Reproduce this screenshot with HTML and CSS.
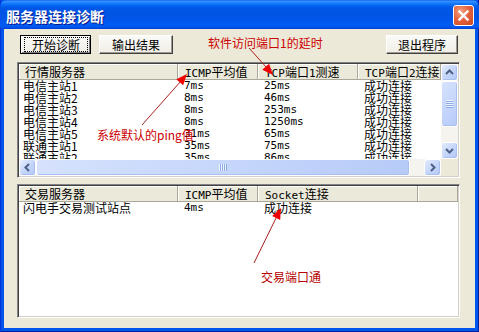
FILE: index.html
```html
<!DOCTYPE html>
<html>
<head>
<meta charset="utf-8">
<link rel="stylesheet" href="styles.css">
</head>
<body>
<div class="window">
  <div class="titlebar">
    <span class="title">服务器连接诊断</span>
    <div class="close">
      <svg width="19" height="19" viewBox="0 0 19 19"><path d="M5.5 5.5 L13.5 13.5 M13.5 5.5 L5.5 13.5" stroke="#fff" stroke-width="2.4" stroke-linecap="square"/></svg>
    </div>
  </div>
  <div class="client">
    <div class="toolbar">
      <button class="btn btn-default"><span class="focus">开始诊断</span></button>
      <button class="btn btn-out">输出结果</button>
      <span class="spacer"></span>
      <button class="btn btn-exit">退出程序</button>
    </div>

    <div class="list list-top">
      <div class="view">
        <div class="head">
          <div class="hc w1">行情服务器</div>
          <div class="hc w2"><span class="m">ICMP</span>平均值</div>
          <div class="hc w3"><span class="m">TCP</span>端口<span class="m">1</span>测速</div>
          <div class="hc w4"><span class="m">TCP</span>端口<span class="m">2</span>连接</div>
        </div>
        <div class="row"><span class="c w1">电信主站1</span><span class="c w2 m">7ms</span><span class="c w3 m">25ms</span><span class="c w4">成功连接</span></div>
        <div class="row"><span class="c w1">电信主站2</span><span class="c w2 m">8ms</span><span class="c w3 m">46ms</span><span class="c w4">成功连接</span></div>
        <div class="row"><span class="c w1">电信主站3</span><span class="c w2 m">8ms</span><span class="c w3 m">253ms</span><span class="c w4">成功连接</span></div>
        <div class="row"><span class="c w1">电信主站4</span><span class="c w2 m">8ms</span><span class="c w3 m">1250ms</span><span class="c w4">成功连接</span></div>
        <div class="row"><span class="c w1">电信主站5</span><span class="c w2 m">31ms</span><span class="c w3 m">65ms</span><span class="c w4">成功连接</span></div>
        <div class="row"><span class="c w1">联通主站1</span><span class="c w2 m">35ms</span><span class="c w3 m">75ms</span><span class="c w4">成功连接</span></div>
        <div class="row"><span class="c w1">联通主站2</span><span class="c w2 m">35ms</span><span class="c w3 m">86ms</span><span class="c w4">成功连接</span></div>
      </div>
      <div class="vscroll">
        <div class="sb"><svg width="15" height="15" viewBox="0 0 15 15"><polyline points="4,9 7.5,5.5 11,9" fill="none" stroke="#4D6185" stroke-width="2"/></svg></div>
        <div class="thumb thumb-v"><div class="grip-v"></div></div>
        <div class="track"></div>
        <div class="sb"><svg width="15" height="15" viewBox="0 0 15 15"><polyline points="4,6 7.5,9.5 11,6" fill="none" stroke="#4D6185" stroke-width="2"/></svg></div>
      </div>
      <div class="hscroll">
        <div class="sb"><svg width="15" height="15" viewBox="0 0 15 15"><polyline points="9,4 5.5,7.5 9,11" fill="none" stroke="#4D6185" stroke-width="2"/></svg></div>
        <div class="thumb thumb-h"><div class="grip-h"></div></div>
        <div class="track"></div>
        <div class="sb"><svg width="15" height="15" viewBox="0 0 15 15"><polyline points="6,4 9.5,7.5 6,11" fill="none" stroke="#4D6185" stroke-width="2"/></svg></div>
      </div>
      <div class="corner"></div>
    </div>

    <div class="list list-bottom">
      <div class="view">
        <div class="head">
          <div class="hc w1">交易服务器</div>
          <div class="hc w2"><span class="m">ICMP</span>平均值</div>
          <div class="hc w5"><span class="m">Socket</span>连接</div>
          <div class="hc w6"></div>
        </div>
        <div class="row"><span class="c w1">闪电手交易测试站点</span><span class="c w2 m">4ms</span><span class="c w5">成功连接</span></div>
      </div>
    </div>
  </div>

  <div class="note n1">软件访问端口<span class="nm">1</span>的延时</div>
  <div class="note n2">系统默认的ping值</div>
  <div class="note n3">交易端口通</div>

  <svg class="arrows" width="479" height="332" viewBox="0 0 479 332">
    <line x1="249" y1="48" x2="267" y2="68" stroke="#A8201A" stroke-width="1"/>
    <polygon points="273,75 262.3,69.8 269.1,63.8" fill="#F00000"/>
    <line x1="142" y1="125" x2="181" y2="81" stroke="#A8201A" stroke-width="1"/>
    <polygon points="187,74 183.1,85.2 176.3,79.3" fill="#F00000"/>
    <line x1="254" y1="263" x2="277" y2="216" stroke="#A8201A" stroke-width="1"/>
    <polygon points="281,208 280.2,219.9 272.1,215.9" fill="#F00000"/>
  </svg>
</div>
</body>
</html>
```

FILE: styles.css
```css
* { box-sizing: border-box; margin: 0; padding: 0; }
html, body { width: 479px; height: 332px; overflow: hidden; }
body {
  font-family: "Noto Sans CJK SC", sans-serif;
  font-size: 12px;
  color: #000;
  background: #fff;
}
.window {
  position: relative;
  width: 479px;
  height: 332px;
  display: flex;
  flex-direction: column;
  background: #0055EA;
  box-shadow: inset 1px 0 #0831D9, inset -1px 0 #001EA0, inset 0 -1px #001EA0;
}
.titlebar {
  height: 29px;
  flex: none;
  display: flex;
  align-items: center;
  padding-top: 2px;
  background: linear-gradient(to bottom, #0058EE 0, #3A93FF 1px, #2A8AFF 2px, #0F75FC 4px, #0262EE 6px, #0057E5 8px, #0054E3 14px, #0055EB 20px, #005CF5 24px, #0058EE 27px, #003DD7 29px);
  border-radius: 7px 7px 0 0;
}
.title {
  margin-left: 6px;
  color: #fff;
  font-weight: bold;
  font-size: 14px;
  line-height: 16px;
  text-shadow: 1px 1px 0 #0A1A8A;
}
.close {
  margin-left: auto;
  margin-right: 5px;
  width: 21px;
  height: 21px;
  border: 1px solid #fff;
  border-radius: 3px;
  background: radial-gradient(circle at 35% 30%, #F3A184 0, #E4643F 45%, #CB451F 100%);
  display: flex;
  align-items: center;
  justify-content: center;
}
.client {
  flex: 1;
  margin: 0 4px 4px 4px;
  background: #ECE9D8;
  padding: 6px 15px 10px 13px;
  display: flex;
  flex-direction: column;
}
.toolbar {
  height: 19px;
  display: flex;
  flex: none;
}
.btn {
  height: 19px;
  font-family: "Noto Sans CJK SC", sans-serif;
  font-size: 12px;
  line-height: 15px;
  color: #000;
  background: linear-gradient(to bottom, #FAFAF7, #F0EEE6);
  border: 1px solid;
  border-color: #fff #404040 #404040 #fff;
  box-shadow: inset -1px -1px 0 #9D9B90;
  padding: 0;
  display: flex;
  align-items: center;
  justify-content: center;
}
.btn-default {
  margin-left: 3px;
  width: 71px;
  border-color: #000;
  box-shadow: inset 1px 1px 0 #fff, inset -1px -1px 0 #808080;
  padding: 1px 2px 1px 3px;
  align-items: stretch;
}
.focus {
  flex: 1;
  border: 1px dotted #000;
  line-height: 13px;
  display: flex;
  align-items: center;
  justify-content: center;
}
.btn-out { margin-left: 8px; width: 74px; }
.spacer { flex: 1; }
.btn-exit { width: 72px; margin-right: 2px; }

.list {
  background: #fff;
  border: 1px solid;
  border-color: #848284 #fff #fff #848284;
  box-shadow: inset 1px 1px 0 #404040, inset -1px -1px 0 #D4D0C8;
  padding: 1px;
  flex: none;
}
.list-top {
  margin-top: 8px;
  height: 116px;
  display: grid;
  grid-template-columns: 1fr 17px;
  grid-template-rows: 1fr 17px;
}
.list-bottom {
  margin-top: 6px;
  height: 134px;
}
.view {
  overflow: hidden;
  min-width: 0;
  min-height: 0;
  white-space: nowrap;
}
.head {
  display: flex;
  height: 16px;
  background: #EBE9DA;
  border-bottom: 1px solid #ACA899;
}
.hc {
  flex: none;
  height: 15px;
  line-height: 15px;
  padding-left: 7px;
  border-right: 1px solid #ACA899;
  box-shadow: inset 1px 1px 0 #fff;
}
.hc.w1 { padding-left: 6px; }
.row {
  display: flex;
  height: 12px;
  line-height: 12px;
}
.c {
  flex: none;
  padding-left: 6px;
}
.c.w1 { padding-left: 4px; }
.w1 { width: 159px; }
.w2 { width: 80px; }
.w3 { width: 100px; }
.w4 { width: 83px; }
.w5 { width: 160px; }
.w6 { width: 40px; }
.m {
  font-family: "DejaVu Sans Mono", monospace;
  font-size: 11px;
}

.vscroll {
  display: flex;
  flex-direction: column;
  background: #F5F4EE;
}
.hscroll {
  display: flex;
  background: #F5F4EE;
}
.corner { background: #ECE9D8; }
.sb {
  width: 17px;
  height: 17px;
  flex: none;
  border: 1px solid #fff;
  border-radius: 3px;
  background: linear-gradient(135deg, #E3EBFE 0, #C4D5FB 55%, #B3C8F7 100%);
  box-shadow: inset -1px -1px 0 #A9BFEF;
  display: flex;
  align-items: center;
  justify-content: center;
}
.track { flex: 1; background: #F5F4EE; }
.thumb {
  flex: none;
  border: 1px solid #fff;
  border-radius: 3px;
  background: linear-gradient(135deg, #D6E2FD 0, #C3D4FB 60%, #B6CAF8 100%);
  box-shadow: inset -1px -1px 0 #A9BFEF;
  display: flex;
  align-items: center;
  justify-content: center;
}
.thumb-v { height: 46px; }
.thumb-h { width: 374px; }
.grip-v {
  width: 7px;
  height: 8px;
  background: repeating-linear-gradient(to bottom, #EEF4FE 0, #EEF4FE 1px, #8CA9E8 1px, #8CA9E8 2px);
}
.grip-h {
  width: 8px;
  height: 7px;
  background: repeating-linear-gradient(to right, #EEF4FE 0, #EEF4FE 1px, #8CA9E8 1px, #8CA9E8 2px);
}

.note {
  position: absolute;
  color: #CC0000;
  font-size: 12px;
  line-height: 12px;
  white-space: nowrap;
}
.n1 { left: 208px; top: 37px; }
.n2 { left: 97px; top: 129px; }
.n3 { left: 261px; top: 271px; color: #B80000; }
.arrows {
  position: absolute;
  left: 0;
  top: 0;
  pointer-events: none;
}
```
